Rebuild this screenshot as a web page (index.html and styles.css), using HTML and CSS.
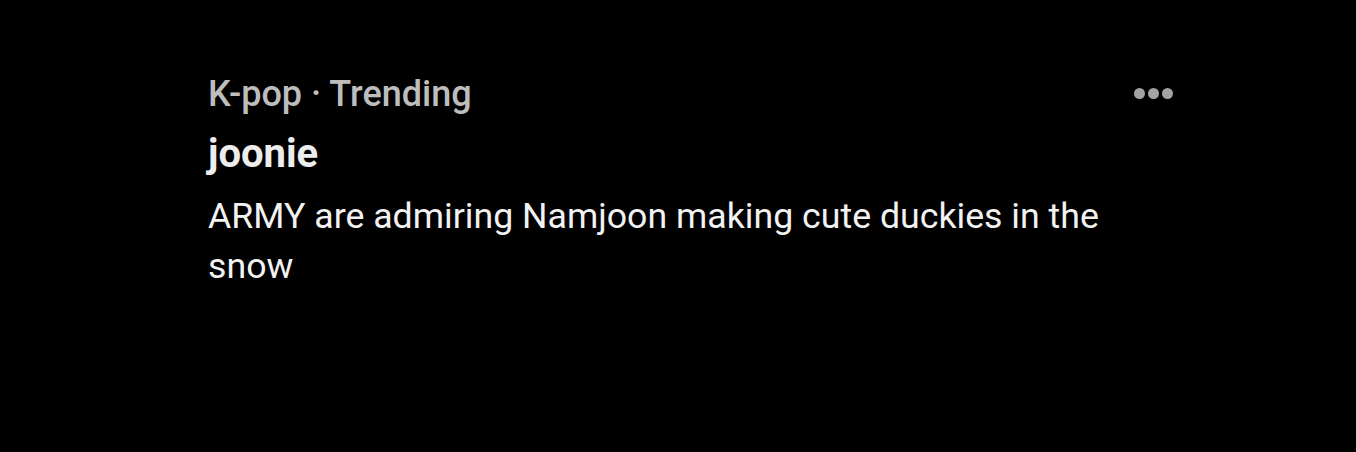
FILE: index.html
```html
<!DOCTYPE html>
<html lang="en">
<head>
<meta charset="utf-8">
<title>Trending</title>
<link rel="stylesheet" href="styles.css">
</head>
<body>
<main class="feed">
  <article class="trend">
    <div class="trend-body">
      <div class="trend-meta">K-pop · Trending</div>
      <h2 class="trend-title">joonie</h2>
      <p class="trend-desc">ARMY are admiring Namjoon making cute duckies in the snow</p>
    </div>
    <button class="trend-more" aria-label="More">
      <span class="dot"></span><span class="dot"></span><span class="dot"></span>
    </button>
  </article>
</main>
</body>
</html>
```

FILE: styles.css
```css
html, body {
  margin: 0;
  padding: 0;
  background: #000;
  height: 100%;
}

body {
  font-family: Roboto, "Noto Sans", sans-serif;
  color: #f0f0f0;
}

.feed {
  padding: 72px 0 0 208px;
  width: 965px;
}

.trend {
  display: flex;
  justify-content: space-between;
  align-items: flex-start;
}

.trend-body {
  width: 920px;
}

.trend-meta {
  font-size: 36px;
  font-weight: 500;
  color: #bdbdbd;
  line-height: 44px;
}

.trend-title {
  margin: 14px 0 0;
  font-size: 40px;
  font-weight: 700;
  color: #ededed;
  line-height: 48px;
}

.trend-desc {
  margin: 13px 0 0;
  font-size: 35.7px;
  font-weight: 400;
  line-height: 50px;
  color: #f2f2f2;
}

.trend-more {
  display: flex;
  gap: 3px;
  margin-top: 16px;
  padding: 0;
  border: 0;
  background: none;
}

.dot {
  width: 11px;
  height: 11px;
  border-radius: 50%;
  background: #a3a3a3;
}
```
